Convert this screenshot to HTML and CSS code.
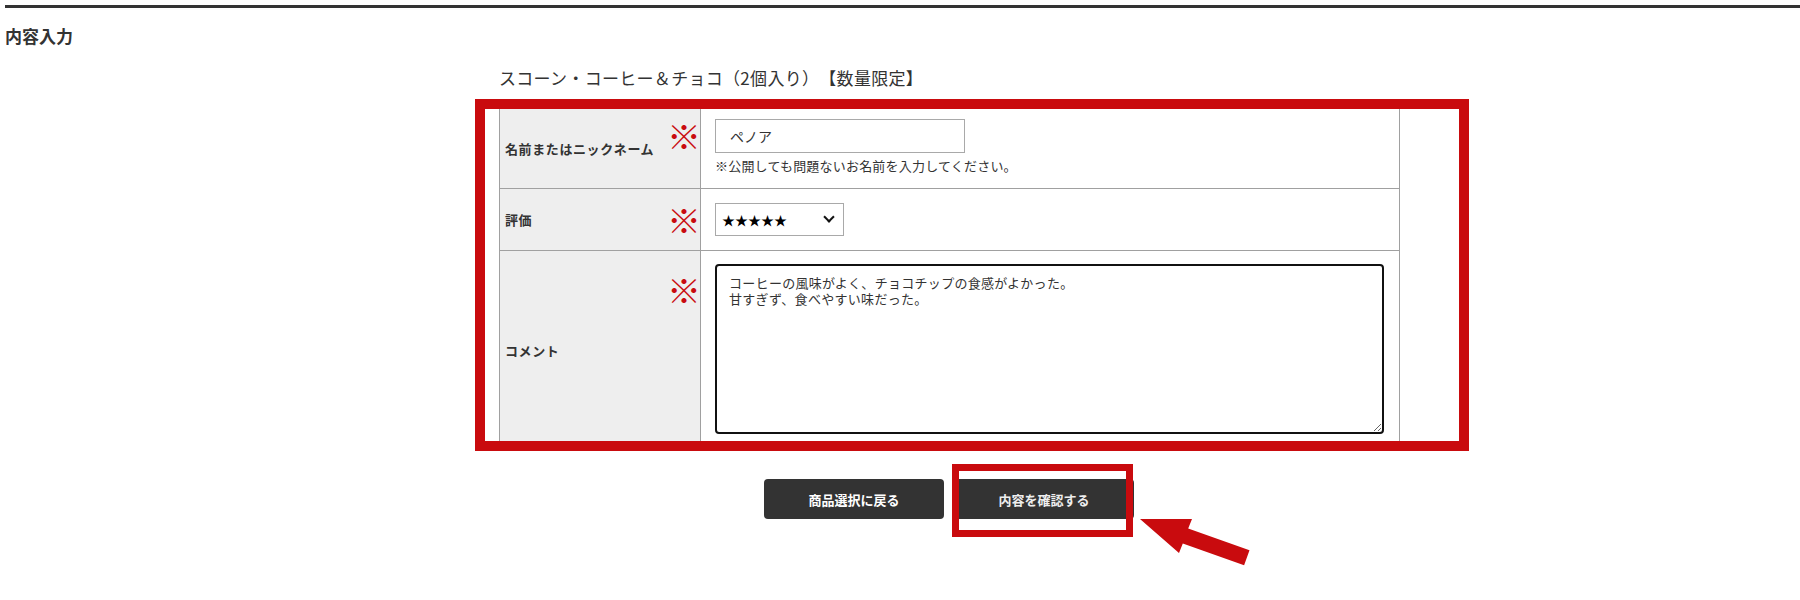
FILE: index.html
```html
<!DOCTYPE html>
<html lang="ja">
<head>
<meta charset="utf-8">
<title>内容入力</title>
<link rel="stylesheet" href="styles.css">
</head>
<body>
<div class="page">
  <div class="rule"></div>
  <h2 class="section-title">内容入力</h2>

  <div class="form-area">
    <p class="product-name">スコーン・コーヒー＆チョコ（2個入り）【数量限定】</p>

    <div class="form-grid">
      <div class="label-cell">
        <span class="label-text">名前またはニックネーム</span>
        <span class="req req--r1">※</span>
      </div>
      <div class="field-cell field-cell--name">
        <input class="text-input" type="text" value="ペノア">
        <p class="note">※公開しても問題ないお名前を入力してください。</p>
      </div>

      <div class="label-cell">
        <span class="label-text">評価</span>
        <span class="req req--r2">※</span>
      </div>
      <div class="field-cell field-cell--rating">
        <div class="select-wrap">
          <select class="rating-select">
            <option>★★★★★</option>
          </select>
        </div>
      </div>

      <div class="label-cell">
        <span class="label-text">コメント</span>
        <span class="req req--r3">※</span>
      </div>
      <div class="field-cell field-cell--comment">
        <textarea class="comment-box">コーヒーの風味がよく、チョコチップの食感がよかった。
甘すぎず、食べやすい味だった。</textarea>
      </div>
    </div>

    <div class="actions">
      <button class="btn" type="button">商品選択に戻る</button>
      <button class="btn btn--confirm" type="button">内容を確認する</button>
    </div>
  </div>

  <div class="mark-box mark-box--form"></div>
  <div class="mark-box mark-box--button"></div>
  <svg class="mark-arrow" width="130" height="70" viewBox="0 0 130 70" aria-hidden="true">
    <polygon points="10,9 62,9 58.2,18.5 119.5,40.2 114.1,55.2 52.8,33.5 49,43" fill="#c90b0e"/>
  </svg>
</div>
</body>
</html>
```

FILE: styles.css
```css
* {
  box-sizing: border-box;
}

html, body {
  margin: 0;
  padding: 0;
  background: #fff;
}

body {
  font-family: "Noto Sans CJK JP", "Noto Sans", sans-serif;
  color: #333;
  text-spacing-trim: space-all;
}

.page {
  position: relative;
  padding: 5px 0 0 5px;
  min-height: 600px;
}

.rule {
  border-top: 3px solid #333;
}

.section-title {
  margin: 16px 0 0;
  font-size: 17px;
  line-height: 24px;
  font-weight: bold;
  color: #333;
}

.form-area {
  margin-left: 494px;
  width: 900px;
}

.product-name {
  margin: 18px 0 18px;
  font-size: 17px;
  line-height: 24px;
  letter-spacing: 0.3px;
  color: #333;
}

.form-grid {
  display: grid;
  grid-template-columns: 201px 699px;
  border-top: 1px solid #a0a0a0;
  border-left: 1px solid #a0a0a0;
}

.label-cell {
  display: flex;
  align-items: center;
  background: #eeeeee;
  border-right: 1px solid #a0a0a0;
  border-bottom: 1px solid #a0a0a0;
  padding: 0 0 0 5px;
}

.label-text {
  flex: 1;
  font-size: 13px;
  font-weight: bold;
  letter-spacing: 0.6px;
  color: #333;
}

.req {
  align-self: flex-start;
  margin-right: -1px;
  color: #c90b0e;
  font-size: 34px;
  line-height: 34px;
}

.req--r1 { margin-top: 10px; }
.req--r2 { margin-top: 14px; }
.req--r3 { margin-top: 22px; }

.field-cell {
  border-right: 1px solid #a0a0a0;
  border-bottom: 1px solid #a0a0a0;
  padding: 10px 14px 10px 14px;
}

.field-cell--name {
  padding-top: 10px;
  padding-bottom: 13px;
}

.field-cell--rating {
  padding-top: 14px;
  padding-bottom: 14px;
}

.field-cell--comment {
  padding-top: 13px;
  padding-bottom: 16px;
}

.text-input {
  display: block;
  width: 250px;
  height: 34px;
  border: 1px solid #a9a9a9;
  border-radius: 0;
  padding: 0 14px;
  font-family: inherit;
  font-size: 14px;
  color: #333;
  background: #fff;
}

.note {
  margin: 4px 0 0;
  font-size: 13px;
  line-height: 18px;
  letter-spacing: 0.2px;
  color: #333;
}

.select-wrap {
  position: relative;
  display: inline-block;
}

.select-wrap::after {
  content: "";
  position: absolute;
  right: 11px;
  top: 10px;
  width: 6px;
  height: 6px;
  border-right: 2px solid #111;
  border-bottom: 2px solid #111;
  transform: rotate(45deg);
  pointer-events: none;
}

.rating-select {
  display: block;
  appearance: none;
  -webkit-appearance: none;
  width: 129px;
  height: 33px;
  border: 1px solid #a9a9a9;
  border-radius: 0;
  background: #fff;
  padding: 0 0 0 6px;
  font-family: inherit;
  font-size: 13px;
  color: #000;
}

.comment-box {
  display: block;
  width: 669px;
  height: 170px;
  border: 2px solid #111;
  border-radius: 4px;
  padding: 9px 12px;
  font-family: inherit;
  font-size: 13px;
  line-height: 16px;
  letter-spacing: 0.3px;
  color: #333;
  resize: vertical;
}

.actions {
  display: flex;
  justify-content: center;
  gap: 10px;
  margin-top: 28px;
}

.btn {
  width: 180px;
  height: 40px;
  border: none;
  border-radius: 4px;
  background: #333;
  color: #fff;
  font-family: inherit;
  font-size: 13px;
  font-weight: bold;
}

.btn--confirm {
  color: #eee;
}

.mark-box {
  position: absolute;
  border-style: solid;
  border-color: #c90b0e;
  pointer-events: none;
}

.mark-box--form {
  left: 475px;
  top: 99px;
  width: 994px;
  height: 352px;
  border-width: 10px;
}

.mark-box--button {
  left: 952px;
  top: 464px;
  width: 181px;
  height: 73px;
  border-width: 7px;
}

.mark-arrow {
  position: absolute;
  left: 1130px;
  top: 510px;
}
```
